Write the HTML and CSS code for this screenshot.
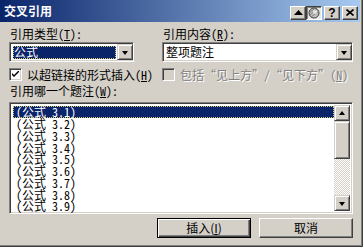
FILE: index.html
```html
<!DOCTYPE html>
<html lang="zh-CN">

<head>
    <meta charset="UTF-8">
    <title>交叉引用</title>
    <link rel="stylesheet" href="styles.css">
</head>

<body>
    <div class="window">
        <div class="titlebar">
            <span class="title">交叉引用</span>
            <div class="caption-btns">
                <span class="cbtn">
                    <svg width="9" height="5" viewBox="0 0 9 5"><polygon points="4.5,0 9,5 0,5" fill="#000"/></svg>
                </span>
                <span class="cbtn pressed">
                    <svg width="12" height="12" viewBox="0 0 12 12">
                        <circle cx="6" cy="6" r="5" fill="#c0c0c0" stroke="#404040"/>
                        <path d="M2 8 L9 2 M3 10 L11 4 M1 6 L6 2" stroke="#808080" fill="none"/>
                        <circle cx="7" cy="5" r="2" fill="#fff" opacity="0.7"/>
                    </svg>
                </span>
                <span class="cbtn gap help">?</span>
                <span class="cbtn gap">
                    <svg width="8" height="7" viewBox="0 0 8 7"><path d="M0.5 0.5 L7.5 6.5 M7.5 0.5 L0.5 6.5" stroke="#000" stroke-width="1.6" fill="none"/></svg>
                </span>
            </div>
        </div>

        <div class="content">
            <div class="row">
                <div class="field left">
                    <div class="label">引用类型(<u>T</u>):</div>
                    <div class="combo">
                        <span class="value sel">公式</span>
                        <span class="drop"><i class="arrow"></i></span>
                    </div>
                </div>
                <div class="field right">
                    <div class="label">引用内容(<u>R</u>):</div>
                    <div class="combo">
                        <span class="value">整项题注</span>
                        <span class="drop"><i class="arrow"></i></span>
                    </div>
                </div>
            </div>

            <div class="row checks">
                <div class="check left">
                    <span class="box">
                        <svg width="7" height="7" viewBox="0 0 7 7"><path d="M0 2 L0 4 L2 6 L7 1 L7 -1 L2 4 Z" fill="#000"/></svg>
                    </span>
                    <span>以超链接的形式插入(<u>H</u>)</span>
                </div>
                <div class="check disabled">
                    <span class="box"></span>
                    <span>包括<span class="q">“</span>见上方<span class="q">”</span>/<span class="q">“</span>见下方<span class="q">”</span>(<u>N</u>)</span>
                </div>
            </div>

            <div class="label label2">引用哪一个题注(<u>W</u>):</div>

            <div class="list">
                <div class="items">
                    <div class="item selected">(公式 3.1)</div>
                    <div class="item">(公式 3.2)</div>
                    <div class="item">(公式 3.3)</div>
                    <div class="item">(公式 3.4)</div>
                    <div class="item">(公式 3.5)</div>
                    <div class="item">(公式 3.6)</div>
                    <div class="item">(公式 3.7)</div>
                    <div class="item">(公式 3.8)</div>
                    <div class="item">(公式 3.9)</div>
                </div>
                <div class="scrollbar">
                    <span class="sbtn"><i class="arrow up"></i></span>
                    <span class="thumb"></span>
                    <span class="track"></span>
                    <span class="sbtn"><i class="arrow"></i></span>
                </div>
            </div>

            <div class="buttons">
                <button class="btn default">插入(<u>I</u>)</button>
                <button class="btn">取消</button>
            </div>
        </div>
    </div>
</body>

</html>
```

FILE: styles.css
```css
* {
    margin: 0;
    padding: 0;
    box-sizing: border-box;
}

body {
    background-color: #d4d0c8;
    font-family: "Noto Sans CJK SC", sans-serif;
    font-size: 12px;
    font-feature-settings: "hwid";
    color: #000;
    overflow: hidden;
}

.window {
    width: 363px;
    height: 247px;
    background-color: #d4d0c8;
    box-shadow: inset -1px -1px #404040, inset -2px -2px #808080;
}

/* title bar */
.titlebar {
    width: 360px;
    height: 22px;
    display: flex;
    align-items: center;
    padding: 0 2px 0 4px;
    background: linear-gradient(90deg, #0a246a, #a6caf0);
}

.title {
    color: #fff;
    font-weight: bold;
    line-height: 14px;
}

.caption-btns {
    margin-left: auto;
    display: flex;
    margin-top: 3px;
}

.cbtn {
    width: 16px;
    height: 14px;
    display: flex;
    align-items: center;
    justify-content: center;
    background-color: #d4d0c8;
    border: 1px solid;
    border-color: #fff #404040 #404040 #fff;
    box-shadow: inset -1px -1px #808080;
}

.cbtn.pressed {
    border-color: #404040 #fff #fff #404040;
    box-shadow: inset 1px 1px #808080;
    background-color: #e8e6e0;
}

.cbtn.gap {
    margin-left: 2px;
}

.help {
    font-family: "Liberation Sans", sans-serif;
    font-weight: bold;
    font-size: 12px;
    line-height: 12px;
}

/* content */
.content {
    padding-left: 9px;
}

.row {
    display: flex;
    gap: 28px;
}

.label {
    line-height: 12px;
    height: 12px;
    padding-left: 1px;
    margin-top: 6px;
}

.field.left {
    width: 125px;
}

.field.right {
    width: 191px;
}

.combo {
    margin-top: 2px;
    height: 20px;
    display: flex;
    align-items: stretch;
    background-color: #fff;
    border: 1px solid;
    border-color: #808080 #fff #fff #808080;
    box-shadow: inset 1px 1px #404040, inset -1px -1px #d4d0c8;
    padding: 2px;
}

.value {
    flex: 1;
    line-height: 14px;
    padding-left: 1px;
    margin-right: 2px;
}

.value.sel {
    background-color: #0a246a;
    color: #fff;
    outline: 1px dotted #d8c878;
    outline-offset: -1px;
    margin: 1px 1px 0 1px;
    line-height: 12px;
}

.drop,
.sbtn {
    width: 16px;
    height: 16px;
    display: flex;
    align-items: center;
    justify-content: center;
    background-color: #d4d0c8;
    border: 1px solid;
    border-color: #d4d0c8 #404040 #404040 #d4d0c8;
    box-shadow: inset 1px 1px #fff, inset -1px -1px #808080;
}

.combo .drop {
    margin: -2px -2px -2px 0;
    height: 16px;
    align-self: center;
}

.arrow {
    width: 0;
    height: 0;
    border-left: 3.5px solid transparent;
    border-right: 3.5px solid transparent;
    border-top: 4px solid #000;
    margin-top: 1px;
}

.arrow.up {
    border-top: 0;
    border-bottom: 4px solid #000;
    margin-top: -1px;
}

/* checkboxes */
.checks {
    gap: 0;
    margin-top: 6px;
    height: 13px;
}

.check {
    display: flex;
    align-items: center;
    gap: 5px;
    line-height: 12px;
}

.check.left {
    width: 153px;
}

.box {
    width: 13px;
    height: 13px;
    display: flex;
    align-items: center;
    justify-content: center;
    background-color: #fff;
    border: 1px solid;
    border-color: #808080 #fff #fff #808080;
    box-shadow: inset 1px 1px #404040, inset -1px -1px #d4d0c8;
}

.check.disabled .box {
    background-color: #d4d0c8;
}

.check.disabled {
    color: #808080;
    text-shadow: 1px 1px #fff;
}

.q {
    font-feature-settings: "fwid";
}

.label2 {
    margin-top: 4px;
}

/* list */
.list {
    margin-top: 5px;
    width: 344px;
    height: 112px;
    display: flex;
    background-color: #fff;
    border: 1px solid;
    border-color: #808080 #fff #fff #808080;
    box-shadow: inset 1px 1px #404040, inset -1px -1px #d4d0c8;
    padding: 2px;
}

.items {
    flex: 1;
    padding-top: 1px;
}

.item {
    height: 11.75px;
    line-height: 11.75px;
    padding-left: 3px;
    margin-left: 1px;
    white-space: nowrap;
}

.item.selected {
    height: 12px;
    line-height: 12px;
    background-color: #0a246a;
    color: #fff;
    outline: 1px dotted #d8c878;
    outline-offset: -1px;
}

.scrollbar {
    width: 16px;
    display: flex;
    flex-direction: column;
}

.thumb {
    height: 38px;
    background-color: #d4d0c8;
    border: 1px solid;
    border-color: #d4d0c8 #404040 #404040 #d4d0c8;
    box-shadow: inset 1px 1px #fff, inset -1px -1px #808080;
}

.track {
    flex: 1;
    background-image: repeating-conic-gradient(#fff 0 25%, #d4d0c8 0 50%);
    background-size: 2px 2px;
}

/* buttons */
.buttons {
    margin-top: 4px;
    padding-left: 148px;
    display: flex;
    gap: 8px;
}

.btn {
    width: 94px;
    height: 20px;
    font-family: inherit;
    font-size: 12px;
    line-height: 12px;
    background-color: #d4d0c8;
    border: 1px solid;
    border-color: #fff #404040 #404040 #fff;
    box-shadow: inset -1px -1px #808080;
}

.btn.default {
    border-color: #000;
    box-shadow: inset 1px 1px #fff, inset -1px -1px #404040, inset -2px -2px #808080;
}
```
